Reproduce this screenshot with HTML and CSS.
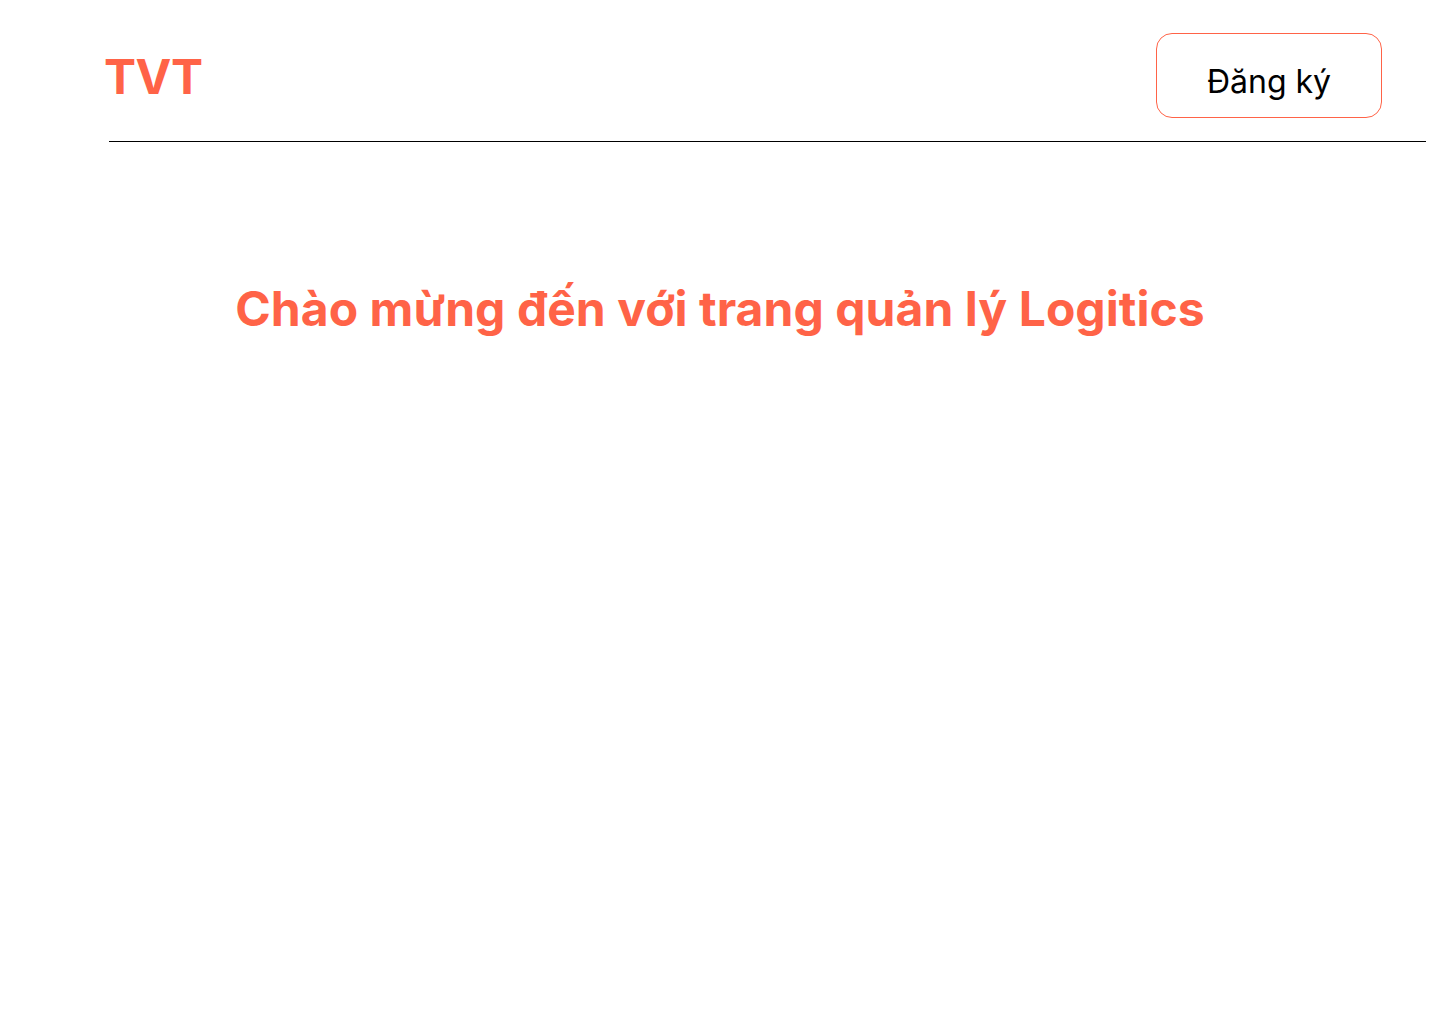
FILE: index.html
```html
<!DOCTYPE html>
<html lang="vi">
<head>
<meta charset="utf-8">
<title>TVT</title>
<link rel="stylesheet" href="styles.css">
</head>
<body>
<header class="header">
  <div class="logo">TVT</div>
  <button class="signup">Đăng ký</button>
</header>
<hr class="divider">
<main class="main">
  <h1 class="title">Chào mừng đến với trang quản lý Logitics</h1>
</main>
</body>
</html>
```
FILE: styles.css
```css
html, body {
  margin: 0;
  padding: 0;
  background: #fff;
  font-family: Inter, "Noto Sans", sans-serif;
}
.header {
  display: flex;
  justify-content: space-between;
  align-items: flex-start;
  padding: 33px 58px 0 104px;
  height: 107px;
  box-sizing: border-box;
}
.logo {
  color: #ff6347;
  font-weight: 700;
  font-size: 48px;
  line-height: 1;
  margin-top: 20px;
  letter-spacing: -0.5px;
}
.signup {
  width: 226px;
  height: 85px;
  border: 1px solid #ff6347;
  border-radius: 16px;
  background: #fff;
  font-family: Inter, "Noto Sans", sans-serif;
  font-size: 32px;
  color: #000;
  padding: 12px 0 0;
  margin-top: 0;
}
.divider {
  margin: 34px 14px 0 109px;
  border: 0;
  border-top: 1px solid #000;
  height: 0;
}
.main {
  display: flex;
  justify-content: center;
  padding-top: 138px;
}
.title {
  margin: 0;
  color: #ff6347;
  font-weight: 700;
  font-size: 48px;
  line-height: 58px;
  letter-spacing: 0.05px;
}
```
